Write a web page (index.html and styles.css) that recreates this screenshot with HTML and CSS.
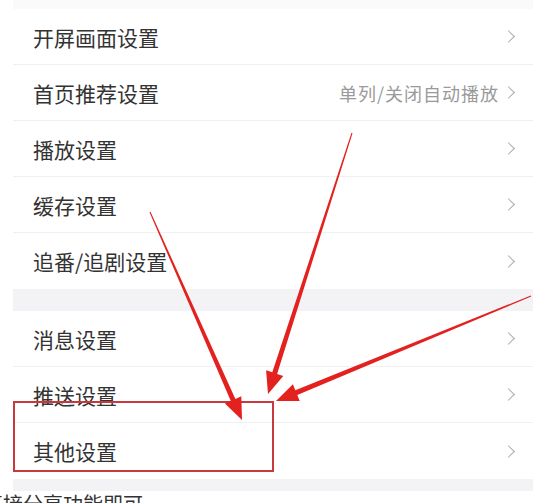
FILE: index.html
```html
<!DOCTYPE html>
<html lang="zh-CN">
<head>
    <meta charset="UTF-8">
    <meta name="viewport" content="width=device-width, initial-scale=1.0">
    <title>设置</title>
    <link rel="stylesheet" href="styles.css">
</head>
<body>
    <div class="shot">
        <div class="gap gap-top"></div>

        <!-- 第一组 -->
        <div class="group">
            <div class="row"><span class="label">开屏画面设置</span><span class="chev"></span></div>
            <div class="row"><span class="label">首页推荐设置</span><span class="value">单列/关闭自动播放</span><span class="chev"></span></div>
            <div class="row"><span class="label">播放设置</span><span class="chev"></span></div>
            <div class="row"><span class="label">缓存设置</span><span class="chev"></span></div>
            <div class="row"><span class="label">追番/追剧设置</span><span class="chev"></span></div>
        </div>

        <div class="gap gap-mid"></div>

        <!-- 第二组 -->
        <div class="group">
            <div class="row"><span class="label">消息设置</span><span class="chev"></span></div>
            <div class="row"><span class="label">推送设置</span><span class="chev"></span></div>
            <div class="row"><span class="label">其他设置</span><span class="chev"></span></div>
        </div>

        <div class="gap gap-bottom"></div>
    </div>

    <p class="caption">直接分享功能即可</p>

    <!-- 标注：红框和箭头 -->
    <svg class="marks" width="542" height="503" viewBox="0 0 542 503">
        <rect x="14" y="402" width="259" height="69" fill="none" stroke="#c9393c" stroke-width="2"/>
        <polygon fill="#e3211f" points="149.5,212.2 230.8,400.9 224.9,403.5 242,420 241.3,396.3 235.4,398.9 150.5,211.8"/>
        <polygon fill="#e3211f" points="351.5,132.8 272.3,372.3 266.1,370.3 268,394 283.3,375.9 277.1,373.9 352.5,133.2"/>
        <polygon fill="#e3211f" points="530.8,295.5 295.3,390.3 292.9,384.3 276,401 299.7,400.9 297.3,394.9 531.2,296.5"/>
    </svg>
</body>
</html>
```

FILE: styles.css
```css
body {
    margin: 0;
    width: 542px;
    height: 503px;
    overflow: hidden;
    position: relative;
    background-color: #fff;
    font-family: "Noto Sans CJK SC", "Noto Sans", sans-serif;
    color: #333;
}
.shot {
    margin-left: 13px;
    width: 520px;
    background-color: #f3f3f5;
}
.gap-top {
    height: 9px;
    background-color: #fafafa;
}
.gap-mid {
    height: 22px;
}
.gap-bottom {
    height: 12px;
}
.group {
    background-color: #fff;
}
.row {
    height: 55px;
    display: flex;
    align-items: center;
    padding: 0 16px 0 20px;
    border-bottom: 1px solid #f0f0f0;
}
.group .row:last-child {
    border-bottom: none;
    height: 56px;
}
.label {
    flex: 1;
    font-size: 21px;
    color: #333;
}
.value {
    font-size: 18px;
    letter-spacing: 1px;
    color: #9a9a9a;
    margin-right: 5px;
}
.chev {
    width: 8px;
    height: 8px;
    border-top: 1.5px solid #a8a8a8;
    border-right: 1.5px solid #a8a8a8;
    transform: rotate(45deg);
    margin-right: 4px;
}
.caption {
    margin: 0 0 0 -17px;
    font-size: 20px;
    line-height: 26px;
    color: #333;
}
.marks {
    position: absolute;
    left: 0;
    top: 0;
    pointer-events: none;
}
```
